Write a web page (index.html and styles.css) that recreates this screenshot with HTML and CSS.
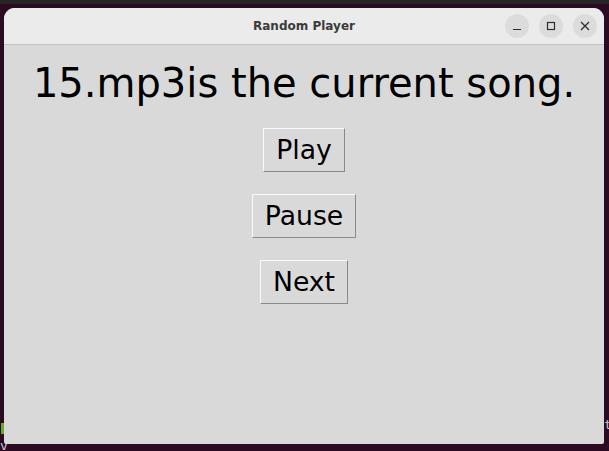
FILE: index.html
```html
<!DOCTYPE html>
<html>
<head>
<meta charset="utf-8">
<link rel="stylesheet" href="styles.css">
</head>
<body>
<div class="desktop">
  <div class="topstrip"></div>
  <div class="term-bits">
    <span class="tb tb-green"></span>
    <span class="tb tb-t">t</span>
    <span class="tb tb-v">v</span>
  </div>
  <div class="window">
    <div class="titlebar">
      <span class="title">Random Player</span>
      <div class="controls">
        <span class="ctl"><svg width="10" height="10" viewBox="0 0 10 10"><path d="M1 8.5H9" stroke="#2e2e2e" stroke-width="1.2"/></svg></span>
        <span class="ctl"><svg width="10" height="10" viewBox="0 0 10 10"><rect x="1.5" y="1.5" width="7" height="7" fill="none" stroke="#2e2e2e" stroke-width="1.2"/></svg></span>
        <span class="ctl"><svg width="10" height="10" viewBox="0 0 10 10"><path d="M1 1L9 9M9 1L1 9" stroke="#2e2e2e" stroke-width="1.3"/></svg></span>
      </div>
    </div>
    <div class="content">
      <div class="heading">15.mp3is the current song.</div>
      <button class="btn">Play</button>
      <button class="btn">Pause</button>
      <button class="btn">Next</button>
    </div>
  </div>
</div>
</body>
</html>
```
FILE: styles.css
```css
html, body {
  margin: 0;
  padding: 0;
  width: 609px;
  height: 451px;
  overflow: hidden;
  background: #2c0a22;
}
.desktop {
  position: relative;
  width: 609px;
  height: 451px;
  background: #2c0a22;
  font-family: "DejaVu Sans", sans-serif;
}
.topstrip {
  height: 4px;
  background: #262626;
}
.term-bits .tb {
  position: absolute;
  font-family: "DejaVu Sans Mono", monospace;
  font-size: 13px;
  color: #c8c8d8;
}
.tb-green {
  left: 1px;
  top: 423px;
  width: 3px;
  height: 11px;
  background: #6aa92a;
}
.tb-t {
  left: 604px;
  top: 417px;
}
.tb-v {
  left: 0px;
  top: 438px;
}
.window {
  position: absolute;
  left: 4px;
  top: 8px;
  width: 600px;
  height: 436px;
  background: #d9d9d9;
  border-radius: 11px 11px 2px 2px;
  overflow: hidden;
  display: flex;
  flex-direction: column;
}
.titlebar {
  height: 36px;
  background: #ebebeb;
  border-bottom: 1px solid #c4c4c4;
  position: relative;
  display: flex;
  align-items: center;
  justify-content: center;
  flex-shrink: 0;
}
.title {
  font-family: "DejaVu Sans", sans-serif;
  font-weight: bold;
  font-size: 12px;
  color: #3b3b3b;
  margin-left: 0px;
}
.controls {
  position: absolute;
  right: 7px;
  top: 6px;
  display: flex;
  gap: 10px;
}
.ctl {
  width: 24px;
  height: 24px;
  border-radius: 50%;
  background: #dcdcdc;
  display: flex;
  align-items: center;
  justify-content: center;
}
.content {
  flex: 1;
  display: flex;
  flex-direction: column;
  align-items: center;
}
.heading {
  font-size: 40px;
  line-height: 47px;
  color: #000;
  margin-top: 15px;
  margin-bottom: 21px;
}
.btn {
  font-family: "DejaVu Sans", sans-serif;
  font-size: 26.67px;
  line-height: 30px;
  color: #000;
  background: #d9d9d9;
  padding: 6px 12px;
  margin: 0 0 22px 0;
  border: 1px solid;
  border-color: #fafafa #8a8a8a #8a8a8a #fafafa;
  border-radius: 0;
}
```
